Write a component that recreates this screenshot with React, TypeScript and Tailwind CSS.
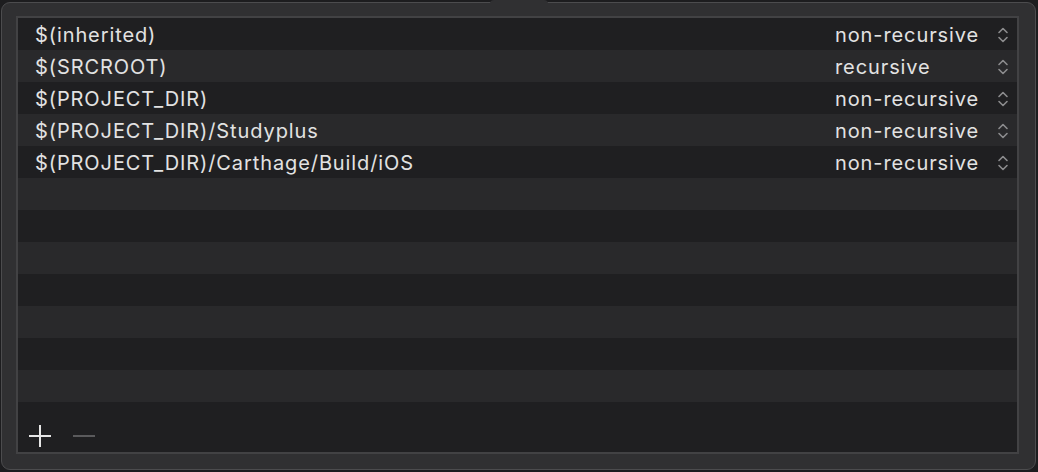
const paths = [
  { path: "$(inherited)", mode: "non-recursive" },
  { path: "$(SRCROOT)", mode: "recursive" },
  { path: "$(PROJECT_DIR)", mode: "non-recursive" },
  { path: "$(PROJECT_DIR)/Studyplus", mode: "non-recursive" },
  { path: "$(PROJECT_DIR)/Carthage/Build/iOS", mode: "non-recursive" },
];

const emptyRows = 7;

function Stepper() {
  return (
    <svg width="12" height="18" viewBox="0 0 12 18" fill="none" stroke="#8c8c8e" strokeWidth="1.6" strokeLinecap="round" strokeLinejoin="round">
      <path d="M2 6.5 6 2.5l4 4" />
      <path d="M2 11.5l4 4 4-4" />
    </svg>
  );
}

export default function App() {
  return (
    <div className="w-[1038px] h-[472px] bg-[#1d1d1f] pl-px pt-[2px] font-['Inter','Noto_Sans',sans-serif]">
      <div className="relative w-[1035px] h-[468px] rounded-[9px] border border-[#4c4c4e] bg-[#303032] pl-[14px] pt-[13px]">
        {/* popover arrow */}
        <div className="absolute -top-[3px] left-[488px] w-[58px] h-[4px] rounded-t-[10px] bg-[#303032]" />
        <div className="w-[1003px] h-[438px] border-2 border-[#424244] flex flex-col">
          {paths.map((row, i) => (
            <div
              key={row.path}
              className={`h-8 flex items-center pl-[17px] pr-[8px] pt-px text-[20px] tracking-[0.9px] text-[#e2e2e2] ${i % 2 === 0 ? "bg-[#1f1f21]" : "bg-[#29292b]"}`}
            >
              <span className="flex-1">{row.path}</span>
              <span className="w-[162px]">{row.mode}</span>
              <Stepper />
            </div>
          ))}
          {Array.from({ length: emptyRows }).map((_, i) => (
            <div key={i} className={`h-8 ${(i + paths.length) % 2 === 0 ? "bg-[#1f1f21]" : "bg-[#29292b]"}`} />
          ))}
          <div className="flex-1 bg-[#1f1f21] flex items-start gap-[22px] pl-[11px] pt-[23px]">
            <svg width="22" height="22" viewBox="0 0 22 22" stroke="#e6e6e6" strokeWidth="2">
              <path d="M11 0v22M0 11h22" />
            </svg>
            <svg width="22" height="22" viewBox="0 0 22 22" stroke="#5a5a5c" strokeWidth="2">
              <path d="M0 11h22" />
            </svg>
          </div>
        </div>
      </div>
    </div>
  );
}
